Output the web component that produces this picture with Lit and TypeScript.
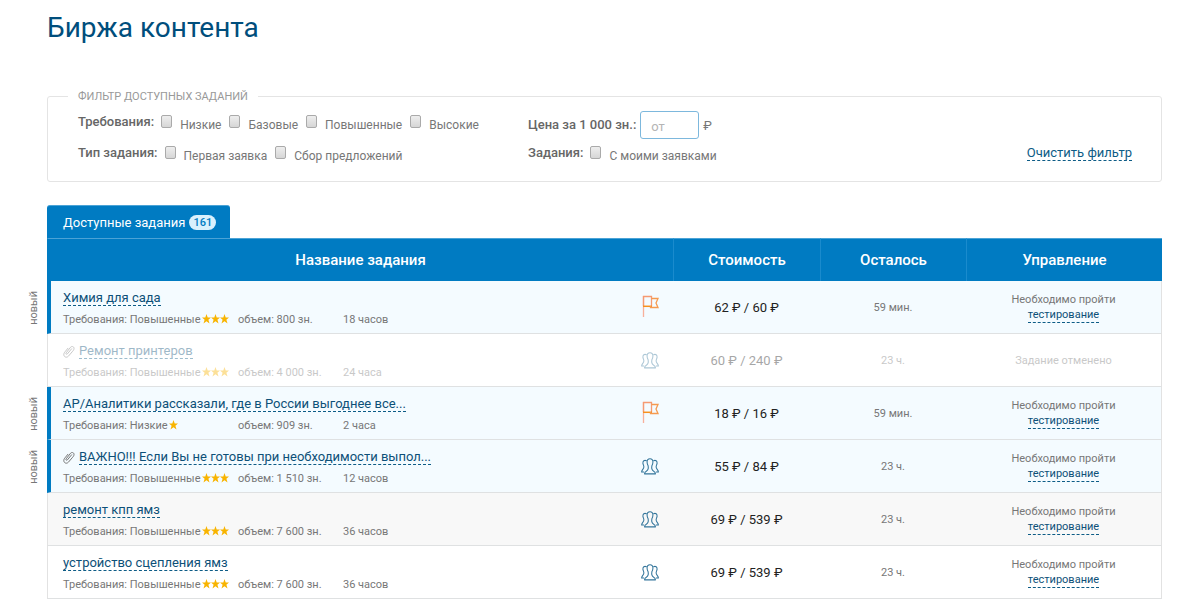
import { LitElement, html, css, svg, nothing } from "lit";
import { customElement, property } from "lit/decorators.js";

interface Task {
  title: string;
  level: string;
  stars: number;
  volume: string;
  term: string;
  bids: "flag" | "people";
  cost: string;
  left: string;
  isNew?: boolean;
  attached?: boolean;
  cancelled?: boolean;
  striped?: boolean;
}

const TASKS: Task[] = [
  { title: "Химия для сада", level: "Повышенные", stars: 3, volume: "800", term: "18 часов", bids: "flag", cost: "62 ₽ / 60 ₽", left: "59 мин.", isNew: true },
  { title: "Ремонт принтеров", level: "Повышенные", stars: 3, volume: "4 000", term: "24 часа", bids: "people", cost: "60 ₽ / 240 ₽", left: "23 ч.", attached: true, cancelled: true },
  { title: "АР/Аналитики рассказали, где в России выгоднее все...", level: "Низкие", stars: 1, volume: "909", term: "2 часа", bids: "flag", cost: "18 ₽ / 16 ₽", left: "59 мин.", isNew: true },
  { title: "ВАЖНО!!! Если Вы не готовы при необходимости выпол...", level: "Повышенные", stars: 3, volume: "1 510", term: "12 часов", bids: "people", cost: "55 ₽ / 84 ₽", left: "23 ч.", isNew: true, attached: true },
  { title: "ремонт кпп ямз", level: "Повышенные", stars: 3, volume: "7 600", term: "36 часов", bids: "people", cost: "69 ₽ / 539 ₽", left: "23 ч.", striped: true },
  { title: "устройство сцепления ямз", level: "Повышенные", stars: 3, volume: "7 600", term: "36 часов", bids: "people", cost: "69 ₽ / 539 ₽", left: "23 ч." },
];

const flagIcon = html`<svg width="18" height="24" viewBox="-1 0 18 24" fill="none" aria-hidden="true">
  <path d="M1.5 1V22" stroke="#f8b09a" stroke-width="1.3" />
  <path d="M1.5 11V1.5H9.5V11" stroke="#f59a72" stroke-width="1.3" />
  <path d="M1 11.3H10" stroke="#f7901e" stroke-width="1.5" />
  <path d="M9.5 3.5H16L14 8L16 12.5H8.5V11" stroke="#f59a50" stroke-width="1.3" />
</svg>`;

const peopleIcon = html`<svg width="18" height="17" viewBox="0.5 0 19 18" fill="none" stroke="#33759b" stroke-width="1.1" stroke-linejoin="round" stroke-linecap="round" aria-hidden="true">
  <path d="M10 .8C8 .8 6.9 2.2 6.9 4.2C6.9 6 7.5 7.2 8 8.1C8.5 11 8.1 12.8 6.4 13.7C4.9 14.5 4.3 15.2 4.2 16.8H15.8C15.7 15.2 15.1 14.5 13.6 13.7C11.9 12.8 11.5 11 12 8.1C12.5 7.2 13.1 6 13.1 4.2C13.1 2.2 12 .8 10 .8Z" />
  <path d="M6.2 2.8C4 1.9 2.3 3.2 2.5 5.4C2.6 7 3.6 8 3.5 9.6C3.4 11.6 1.2 12.5 1.1 14.8H3.4" />
  <path d="M13.8 2.8C16 1.9 17.7 3.2 17.5 5.4C17.4 7 16.4 8 16.5 9.6C16.6 11.6 18.8 12.5 18.9 14.8H16.6" />
</svg>`;

const clipIcon = html`<svg width="12" height="13" viewBox="0 0 12 13" fill="none" stroke="#777" stroke-width="1" stroke-linecap="round" stroke-linejoin="round" aria-hidden="true">
  <path d="M8.6 3.8L4.4 8.9C3.6 9.8 2.4 8.9 3.1 7.9L7.6 2.2C8.9.7 11.7 1.7 10.9 4.3C10.7 5 10.2 5.6 9.7 6.2L5.4 11.2C3.3 13.4.2 11.6.9 8.8C1 8.1 1.5 7.4 2 6.8L4.9 3.3" />
</svg>`;

const starIcons = (count: number) => html`<svg class="stars" width=${count * 9} height="10" viewBox="0 0 ${count * 9} 10" fill="#f8b400" role="img" aria-label="Уровень ${count}">
  ${Array.from({ length: count }, (_, i) => svg`<path transform="translate(${i * 9} 0)" d="M4.5 0L5.7 3.5H9L6.4 5.8L7.5 9.4L4.5 7.3L1.5 9.4L2.6 5.8L0 3.5H3.3Z" />`)}
</svg>`;

@customElement("task-filter")
export class TaskFilter extends LitElement {
  static styles = css`
    :host { display: block; }
    * { box-sizing: border-box; }
    .filter {
      margin: 0;
      padding: 7px 29px 11px 20px;
      border: 1px solid #e4e4e4;
      border-radius: 3px;
      min-width: 0;
    }
    .legend {
      padding: 1px 10px 0;
      font-size: 11px;
      line-height: 15px;
      color: #999;
      text-transform: uppercase;
    }
    .rows {
      display: grid;
      grid-template-columns: 450px 1fr auto;
      row-gap: 3px;
      padding-left: 10px;
    }
    .group { display: flex; gap: 7px; height: 28px; white-space: nowrap; }
    .main { grid-column: 1; }
    .side { grid-column: 2; }
    .options { display: flex; gap: 8px; }
    .name { font-weight: 500; line-height: 22px; color: #666; }
    .option { display: flex; gap: 8px; font-size: 12px; line-height: 28px; }
    .box {
      appearance: none;
      width: 11px;
      height: 13px;
      margin: 4px 0 0;
      border: 1px solid #aaa;
      border-radius: 2px;
      background: linear-gradient(#eee, #d6d6d6);
    }
    .box:checked { background: #007bc2; }
    .price { align-items: center; gap: 4px; }
    .price .name { line-height: 28px; }
    .amount {
      width: 59px;
      height: 28px;
      padding: 2px 10px 0;
      border: 1px solid #7db8dd;
      border-radius: 3px;
      background: #fff;
      color: #555;
      font: inherit;
    }
    .amount::placeholder { color: #b5b5b5; opacity: 1; }
    .clear {
      grid-column: 3;
      grid-row: 2;
      align-self: start;
      margin-top: 3px;
      line-height: 15px;
      color: #0d5c86;
      text-decoration: none;
      border-bottom: 1px dashed #0d5c86;
    }
  `;

  private option(text: string) {
    return html`<label class="option"><input class="box" type="checkbox" />${text}</label>`;
  }

  render() {
    return html`<fieldset class="filter">
      <legend class="legend">Фильтр доступных заданий</legend>
      <div class="rows">
        <div class="group main" role="group" aria-labelledby="level">
          <span class="name" id="level">Требования:</span>
          <div class="options">${["Низкие", "Базовые", "Повышенные", "Высокие"].map((t) => this.option(t))}</div>
        </div>
        <div class="group side price">
          <label class="name" for="amount">Цена за 1 000 зн.:</label>
          <input class="amount" id="amount" type="text" placeholder="от" />
          <span>₽</span>
        </div>
        <div class="group main" role="group" aria-labelledby="kind">
          <span class="name" id="kind">Тип задания:</span>
          <div class="options">${["Первая заявка", "Сбор предложений"].map((t) => this.option(t))}</div>
        </div>
        <div class="group side" role="group" aria-labelledby="mine">
          <span class="name" id="mine">Задания:</span>
          <div class="options">${this.option("С моими заявками")}</div>
        </div>
        <a class="clear" href="#">Очистить фильтр</a>
      </div>
    </fieldset>`;
  }
}

@customElement("task-table")
export class TaskTable extends LitElement {
  @property({ attribute: false }) tasks: Task[] = [];

  static styles = css`
    :host { display: block; }
    * { box-sizing: border-box; }
    .table {
      width: 100%;
      table-layout: fixed;
      border-collapse: separate;
      border-spacing: 0;
      font-size: 11px;
    }
    .col-new { width: 25px; }
    .col-bids { width: 47px; }
    .col-cost { width: 147px; }
    .col-left { width: 146px; }
    .col-manage { width: 196px; }
    .head {
      height: 43px;
      padding: 0;
      background: #007bc2;
      border-top: 1px solid #4ba3d6;
      border-left: 1px solid #1a8bcd;
      color: #fff;
      font-size: 15px;
      font-weight: 500;
      line-height: 20px;
    }
    .first { border-left-color: #007bc2; }
    .none { padding: 0; }
    .cell {
      height: 53px;
      padding: 1px 0 0;
      border-bottom: 1px solid #dfe1e2;
      text-align: center;
      vertical-align: middle;
      line-height: 15px;
    }
    .title-cell {
      padding: 9px 0 4px 15px;
      border-left: 1px solid #e2e2e2;
      text-align: left;
      vertical-align: top;
    }
    .bids { padding: 0; }
    .manage { border-right: 1px solid #e2e2e2; }
    .new .cell { background: #f4fbff; }
    .new .title-cell { border-left: 4px solid #007bc2; padding-left: 12px; }
    .striped .cell { background: #f8f8f8; }
    .tag { padding: 0 0 0 4px; vertical-align: middle; }
    .tag-text {
      display: block;
      writing-mode: vertical-rl;
      transform: rotate(180deg);
      line-height: 16px;
      width: 16px;
      text-align: center;
    }
    .title { display: flex; align-items: center; gap: 4px; height: 16px; white-space: nowrap; }
    .link { color: #0d5078; text-decoration: none; border-bottom: 1px dashed #0d5c86; }
    .title .link { font-size: 13px; line-height: 15px; }
    .meta {
      display: grid;
      grid-template-columns: 175px 105px auto;
      margin-top: 6px;
      line-height: 16px;
      white-space: nowrap;
    }
    .stars { margin-left: 1px; vertical-align: -1px; }
    .icon { display: flex; justify-content: center; }
    .cost { font-size: 13px; color: #222; }
    .manage .link { display: inline-block; line-height: 14px; }
    .cancelled .title, .cancelled .meta, .cancelled .icon, .cancelled .value { opacity: 0.4; }
  `;

  private row(task: Task) {
    const state = `${task.isNew ? "new" : ""} ${task.cancelled ? "cancelled" : ""} ${task.striped ? "striped" : ""}`;
    return html`<tr class=${state}>
      <td class="tag">${task.isNew ? html`<span class="tag-text">новый</span>` : nothing}</td>
      <td class="cell title-cell">
        <div class="title">${task.attached ? clipIcon : nothing}<a class="link" href="#">${task.title}</a></div>
        <div class="meta">
          <span>Требования: ${task.level}${starIcons(task.stars)}</span>
          <span>объем: ${task.volume} зн.</span>
          <span>${task.term}</span>
        </div>
      </td>
      <td class="cell bids"><span class="icon">${task.bids === "flag" ? flagIcon : peopleIcon}</span></td>
      <td class="cell cost"><span class="value">${task.cost}</span></td>
      <td class="cell"><span class="value">${task.left}</span></td>
      <td class="cell manage">
        ${task.cancelled
          ? html`<span class="value">Задание отменено</span>`
          : html`Необходимо пройти<br /><a class="link" href="#">тестирование</a>`}
      </td>
    </tr>`;
  }

  render() {
    return html`<table class="table">
      <colgroup>
        <col class="col-new" /><col /><col class="col-bids" /><col class="col-cost" /><col class="col-left" /><col class="col-manage" />
      </colgroup>
      <thead>
        <tr>
          <td class="none"></td>
          <th class="head first" colspan="2" scope="colgroup">Название задания</th>
          <th class="head" scope="col">Стоимость</th>
          <th class="head" scope="col">Осталось</th>
          <th class="head" scope="col">Управление</th>
        </tr>
      </thead>
      <tbody>${this.tasks.map((task) => this.row(task))}</tbody>
    </table>`;
  }
}

@customElement("app-root")
export class AppRoot extends LitElement {
  static styles = css`
    :host {
      display: block;
      background: #fff;
      color: #777;
      font-family: Roboto, "Liberation Sans", sans-serif;
      font-size: 13px;
    }
    * { box-sizing: border-box; }
    .page { padding: 8px 38px 0 22px; }
    .top { padding-left: 25px; }
    .heading {
      margin: 0 0 40px;
      color: #004e7c;
      font-size: 28px;
      font-weight: 400;
      line-height: 40px;
    }
    .tab {
      display: inline-flex;
      align-items: center;
      gap: 4px;
      height: 33px;
      margin-top: 23px;
      padding: 1px 14px 0 16px;
      border: 0;
      border-top: 1px solid #4ba3d6;
      border-radius: 3px 3px 0 0;
      background: #007bc2;
      color: #fff;
      font: inherit;
      vertical-align: top;
    }
    .count {
      padding: 0 4px;
      border-radius: 8px;
      background: #d9f0fd;
      color: #007bc2;
      font-size: 11px;
      font-weight: 500;
      line-height: 15px;
    }
  `;

  render() {
    return html`<main class="page">
      <div class="top">
        <h1 class="heading">Биржа контента</h1>
        <task-filter></task-filter>
        <button class="tab" type="button">Доступные задания <span class="count">161</span></button>
      </div>
      <task-table .tasks=${TASKS}></task-table>
    </main>`;
  }
}
